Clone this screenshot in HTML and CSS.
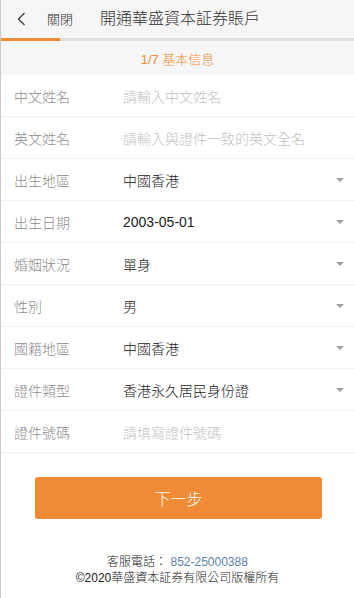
FILE: index.html
```html
<!DOCTYPE html>
<html lang="zh-Hant">
<head>
<meta charset="utf-8">
<title>開通華盛資本証券賬戶</title>
<link rel="stylesheet" href="styles.css">
</head>
<body>
<div class="page">
  <header class="topbar">
    <svg class="back" width="11" height="14" viewBox="0 0 11 14"><path d="M8.5 1 L2.5 7 L8.5 13" fill="none" stroke="#333" stroke-width="1.2"/></svg>
    <span class="close">關閉</span>
    <span class="title">開通華盛資本証券賬戶</span>
  </header>
  <div class="progress"><div class="progress-fill" style="width:59px"></div></div>
  <div class="step">1/7 基本信息</div>
  <div class="form">
    <div class="row"><span class="label">中文姓名</span><span class="value placeholder">請輸入中文姓名</span></div>
    <div class="row"><span class="label">英文姓名</span><span class="value placeholder">請輸入與證件一致的英文全名</span></div>
    <div class="row"><span class="label">出生地區</span><span class="value">中國香港</span><span class="caret"></span></div>
    <div class="row"><span class="label">出生日期</span><span class="value">2003-05-01</span><span class="caret"></span></div>
    <div class="row"><span class="label">婚姻狀況</span><span class="value">單身</span><span class="caret"></span></div>
    <div class="row"><span class="label">性別</span><span class="value">男</span><span class="caret"></span></div>
    <div class="row"><span class="label">國籍地區</span><span class="value">中國香港</span><span class="caret"></span></div>
    <div class="row"><span class="label">證件類型</span><span class="value">香港永久居民身份證</span><span class="caret"></span></div>
    <div class="row"><span class="label">證件號碼</span><span class="value placeholder">請填寫證件號碼</span></div>
  </div>
  <button class="next">下一步</button>
  <footer class="footer">
    <div>客服電話： <span class="phone">852-25000388</span></div>
    <div>©2020華盛資本証券有限公司版權所有</div>
  </footer>
</div>
</body>
</html>
```
FILE: styles.css
```css
html, body {
  margin: 0;
  padding: 0;
  background: #fff;
}
body {
  font-family: "Liberation Sans", "Noto Sans CJK TC", sans-serif;
  font-weight: 300;
  color: #333;
}
.page {
  width: 354px;
  height: 598px;
  box-sizing: border-box;
  border-left: 1px solid #c9c9c9;
  overflow: hidden;
}
.topbar {
  height: 38px;
  background: #f6f6f6;
  display: flex;
  align-items: center;
  padding-left: 15px;
}
.back {
  display: block;
}
.close {
  margin-left: 20px;
  font-size: 13px;
  color: #333;
  line-height: 1;
}
.title {
  margin-left: 27px;
  font-size: 16px;
  color: #333;
  line-height: 1;
}
.progress {
  height: 3px;
  background: #dedede;
}
.progress-fill {
  height: 3px;
  background: #f08a34;
}
.step {
  height: 34px;
  background: #f6f6f6;
  display: flex;
  align-items: center;
  justify-content: center;
  font-size: 13px;
  color: #f08a34;
}
.row {
  height: 42px;
  box-sizing: border-box;
  border-bottom: 1px solid #f1f1f1;
  display: flex;
  align-items: center;
  padding: 0 10px 0 13px;
  font-size: 14px;
}
.label {
  width: 109px;
  color: #8c8c8c;
  flex: none;
}
.value {
  flex: 1;
  color: #222;
}
.placeholder {
  color: #c2c2c2;
}
.caret {
  width: 0;
  height: 0;
  border-left: 4px solid transparent;
  border-right: 4px solid transparent;
  border-top: 4px solid #a0a0a0;
}
.next {
  display: block;
  margin: 24px 0 0 34px;
  width: 287px;
  height: 42px;
  border: none;
  border-radius: 3px;
  background: #f08a34;
  color: #fff;
  font-family: inherit;
  font-weight: 300;
  font-size: 16px;
  padding: 0;
}
.footer {
  margin-top: 35px;
  text-align: center;
  font-size: 12px;
  line-height: 16px;
  color: #222;
}
.phone {
  color: #5b7fae;
}
```
